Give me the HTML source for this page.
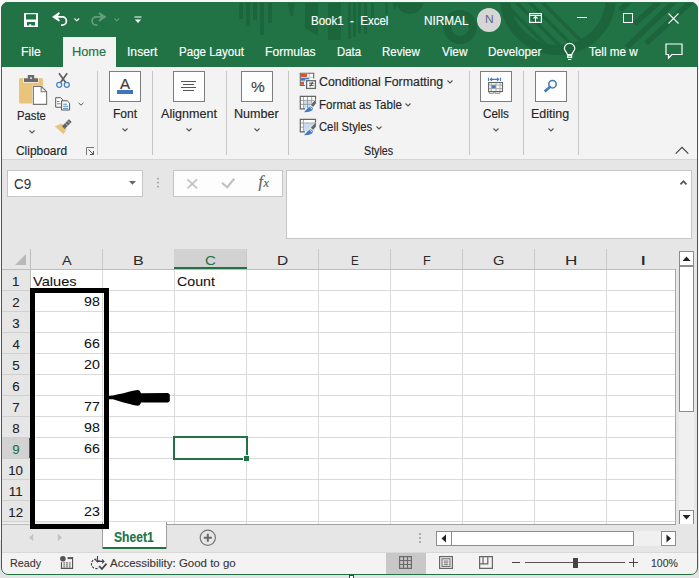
<!DOCTYPE html><html><head><meta charset="utf-8"><style>
*{margin:0;padding:0;box-sizing:border-box}
html,body{width:699px;height:578px;overflow:hidden;background:#f7f7f7;font-family:"Liberation Sans",sans-serif}
#wrap{position:absolute;left:0;top:0;width:699px;height:578px;clip-path:inset(2px 1px 3px 1px round 7px);background:#e6e6e6}
.a{position:absolute}
.t{position:absolute;white-space:nowrap;line-height:1;transform-origin:0 0}
#frame{position:absolute;left:1px;top:2px;width:697px;height:573px;border-radius:7px;border:1px solid #217346}
.box{position:absolute;width:32px;height:31px;border:1px solid #7d7d7d;background:#fdfdfd;top:71px}
.sep{position:absolute;width:1px;background:#c6c6c6;top:71px;height:84px}
svg{position:absolute;overflow:visible}
</style></head><body><div class="a" style="left:0;top:540px;width:699px;height:38px;background:#e3e3e3"></div><div id="wrap">
<div class="a" style="left:0px;top:0px;width:699px;height:67px;background:#217346;"></div>
<div class="a" style="left:239px;top:2px;width:4px;height:17px;background:#1c663d;"></div>
<div class="a" style="left:246px;top:2px;width:4px;height:24px;background:#1c663d;"></div>
<div class="a" style="left:253px;top:2px;width:4px;height:18px;background:#1c663d;"></div>
<div class="a" style="left:260px;top:2px;width:4px;height:33px;background:#1c663d;"></div>
<div class="a" style="left:268px;top:2px;width:4px;height:21px;background:#1c663d;"></div>
<div class="a" style="left:328px;top:2px;width:13px;height:38px;background:#1c663d;"></div>
<div class="a" style="left:348px;top:2px;width:3px;height:37px;background:#1c663d;"></div>
<div class="a" style="left:353px;top:2px;width:3px;height:35px;background:#1c663d;"></div>
<div class="a" style="left:358px;top:2px;width:3px;height:31px;background:#1c663d;"></div>
<div class="a" style="left:364px;top:2px;width:3px;height:32px;background:#1c663d;"></div>
<div class="a" style="left:371px;top:2px;width:3px;height:24px;background:#1c663d;"></div>
<div class="a" style="left:385px;top:2px;width:3px;height:12px;background:#1c663d;"></div>
<svg style="left:0;top:0" width="699" height="67"><polygon fill="#1c663d" points="287,2 295,2 293,16 291,16"/><polygon fill="#1c663d" points="305,2 318,2 318,36 305,28"/><polygon fill="#1c663d" points="392,2 398,2 395,10"/></svg>
<svg style="left:0;top:0" width="699" height="67"><defs><clipPath id="tb"><rect x="0" y="2" width="699" height="65"/></clipPath><clipPath id="bc"><circle cx="558" cy="-3" r="48"/></clipPath></defs><g clip-path="url(#tb)" fill="none" stroke="#1c643c"><circle cx="410" cy="0" r="14" fill="#1c643c" stroke="none"/><circle cx="460" cy="27" r="13" stroke-width="8"/><circle cx="558" cy="-3" r="53" stroke-width="10"/><g clip-path="url(#bc)" stroke-width="3.5"><path d="M496 -5L556 55M509 -5L569 55M522 -5L582 55M535 -5L595 55"/></g><path d="M620 10L630 1M634.5 24L661 0M626.5 47.5L675 1M646 43.5L692 1" stroke-width="5.5"/></g></svg>
<div class="a" style="left:63px;top:37px;width:53px;height:30px;background:#f3f3f3;"></div>
<div class="t" style="left:21.02px;top:45.6px;font-size:12px;color:#fff;transform:scaleX(1.0213);-webkit-text-stroke:0.15px #fff;">File</div>
<div class="t" style="left:72.48px;top:45.6px;font-size:12px;color:#217346;transform:scaleX(1.0663);-webkit-text-stroke:0.15px #217346;">Home</div>
<div class="t" style="left:126.71px;top:45.6px;font-size:12px;color:#fff;transform:scaleX(1.0118);-webkit-text-stroke:0.15px #fff;">Insert</div>
<div class="t" style="left:178.88px;top:45.6px;font-size:12px;color:#fff;transform:scaleX(0.9629);-webkit-text-stroke:0.15px #fff;">Page Layout</div>
<div class="t" style="left:265.13px;top:45.6px;font-size:12px;color:#fff;transform:scaleX(1.0090);-webkit-text-stroke:0.15px #fff;">Formulas</div>
<div class="t" style="left:336.69px;top:45.6px;font-size:12px;color:#fff;transform:scaleX(0.9442);-webkit-text-stroke:0.15px #fff;">Data</div>
<div class="t" style="left:382.28px;top:45.6px;font-size:12px;color:#fff;transform:scaleX(0.9583);-webkit-text-stroke:0.15px #fff;">Review</div>
<div class="t" style="left:441.54px;top:45.6px;font-size:12px;color:#fff;transform:scaleX(0.9868);-webkit-text-stroke:0.15px #fff;">View</div>
<div class="t" style="left:487.86px;top:45.6px;font-size:12px;color:#fff;transform:scaleX(0.9753);-webkit-text-stroke:0.15px #fff;">Developer</div>
<div class="t" style="left:589.47px;top:45.6px;font-size:12px;color:#fff;transform:scaleX(0.9759);-webkit-text-stroke:0.15px #fff;">Tell me w</div>
<div class="t" style="left:310.78px;top:14.600000000000001px;font-size:12.5px;color:#fff;transform:scaleX(0.9204);-webkit-text-stroke:0.15px #fff;">Book1&nbsp;&nbsp;-&nbsp;&nbsp;Excel</div>
<div class="t" style="left:423.76px;top:14.8px;font-size:12.5px;color:#fff;transform:scaleX(0.9408);-webkit-text-stroke:0.15px #fff;">NIRMAL</div>
<div class="a" style="left:477px;top:8px;width:24px;height:24px;border-radius:50%;background:#d6d6d6"></div>
<div class="t" style="left:484.54px;top:14px;font-size:11.5px;color:#66668f;transform:scaleX(1.0404);">N</div>
<div class="a" style="left:0px;top:67px;width:699px;height:92px;background:#f3f3f3;"></div>
<div class="a" style="left:0px;top:159px;width:699px;height:1px;background:#d6d6d6;"></div>
<div class="t" style="left:16.70px;top:110px;font-size:12px;color:#262626;transform:scaleX(0.9396);-webkit-text-stroke:0.15px #262626;">Paste</div>
<div class="t" style="left:15.90px;top:144.6px;font-size:12px;color:#262626;transform:scaleX(0.9944);-webkit-text-stroke:0.15px #262626;">Clipboard</div>
<div class="sep" style="left:97px"></div>
<div class="sep" style="left:152px"></div>
<div class="sep" style="left:226px"></div>
<div class="sep" style="left:288px"></div>
<div class="sep" style="left:469px"></div>
<div class="sep" style="left:523px"></div>
<div class="sep" style="left:578px"></div>
<div class="box" style="left:109px"></div>
<div class="box" style="left:173px"></div>
<div class="box" style="left:241px"></div>
<div class="box" style="left:480px"></div>
<div class="box" style="left:535px"></div>
<div class="t" style="left:112.63px;top:108px;font-size:12px;color:#262626;transform:scaleX(1.0052);-webkit-text-stroke:0.15px #262626;">Font</div>
<div class="t" style="left:161.00px;top:108px;font-size:12px;color:#262626;transform:scaleX(1.0473);-webkit-text-stroke:0.15px #262626;">Alignment</div>
<div class="t" style="left:234.49px;top:108px;font-size:12px;color:#262626;transform:scaleX(1.0477);-webkit-text-stroke:0.15px #262626;">Number</div>
<div class="t" style="left:482.62px;top:108px;font-size:12px;color:#262626;transform:scaleX(0.9696);-webkit-text-stroke:0.15px #262626;">Cells</div>
<div class="t" style="left:531.30px;top:108px;font-size:12px;color:#262626;transform:scaleX(1.0395);-webkit-text-stroke:0.15px #262626;">Editing</div>
<div class="t" style="left:318.88px;top:76px;font-size:12px;color:#262626;transform:scaleX(1.0290);-webkit-text-stroke:0.15px #262626;">Conditional Formatting</div>
<div class="t" style="left:318.57px;top:98.7px;font-size:12px;color:#262626;transform:scaleX(0.9668);-webkit-text-stroke:0.15px #262626;">Format as Table</div>
<div class="t" style="left:318.94px;top:121.30000000000001px;font-size:12px;color:#262626;transform:scaleX(0.9375);-webkit-text-stroke:0.15px #262626;">Cell Styles</div>
<div class="t" style="left:363.52px;top:144.6px;font-size:12px;color:#262626;transform:scaleX(0.8916);-webkit-text-stroke:0.15px #262626;">Styles</div>
<div class="a" style="left:7px;top:170px;width:136px;height:27px;background:#fff;border:1px solid #c6c6c6"></div>
<div class="t" style="left:14.03px;top:177px;font-size:14.5px;color:#333;transform:scaleX(0.9234);-webkit-text-stroke:0.05px #333;">C9</div>
<div class="a" style="left:173px;top:170px;width:110px;height:27px;background:#fdfdfd;border:1px solid #c6c6c6"></div>
<div class="a" style="left:286px;top:170px;width:406px;height:69px;background:#fff;border:1px solid #c6c6c6"></div>
<div class="a" style="left:31px;top:270px;width:644px;height:254px;background:#fff;"></div>
<div class="a" style="left:31px;top:290px;width:644px;height:1px;background:#dadada;"></div>
<div class="a" style="left:1px;top:290px;width:29px;height:1px;background:#d0d0d0;"></div>
<div class="a" style="left:31px;top:311px;width:644px;height:1px;background:#dadada;"></div>
<div class="a" style="left:1px;top:311px;width:29px;height:1px;background:#d0d0d0;"></div>
<div class="a" style="left:31px;top:332px;width:644px;height:1px;background:#dadada;"></div>
<div class="a" style="left:1px;top:332px;width:29px;height:1px;background:#d0d0d0;"></div>
<div class="a" style="left:31px;top:353px;width:644px;height:1px;background:#dadada;"></div>
<div class="a" style="left:1px;top:353px;width:29px;height:1px;background:#d0d0d0;"></div>
<div class="a" style="left:31px;top:374px;width:644px;height:1px;background:#dadada;"></div>
<div class="a" style="left:1px;top:374px;width:29px;height:1px;background:#d0d0d0;"></div>
<div class="a" style="left:31px;top:395px;width:644px;height:1px;background:#dadada;"></div>
<div class="a" style="left:1px;top:395px;width:29px;height:1px;background:#d0d0d0;"></div>
<div class="a" style="left:31px;top:416px;width:644px;height:1px;background:#dadada;"></div>
<div class="a" style="left:1px;top:416px;width:29px;height:1px;background:#d0d0d0;"></div>
<div class="a" style="left:31px;top:437px;width:644px;height:1px;background:#dadada;"></div>
<div class="a" style="left:1px;top:437px;width:29px;height:1px;background:#d0d0d0;"></div>
<div class="a" style="left:31px;top:458px;width:644px;height:1px;background:#dadada;"></div>
<div class="a" style="left:1px;top:458px;width:29px;height:1px;background:#d0d0d0;"></div>
<div class="a" style="left:31px;top:479px;width:644px;height:1px;background:#dadada;"></div>
<div class="a" style="left:1px;top:479px;width:29px;height:1px;background:#d0d0d0;"></div>
<div class="a" style="left:31px;top:500px;width:644px;height:1px;background:#dadada;"></div>
<div class="a" style="left:1px;top:500px;width:29px;height:1px;background:#d0d0d0;"></div>
<div class="a" style="left:31px;top:521px;width:644px;height:1px;background:#dadada;"></div>
<div class="a" style="left:1px;top:521px;width:29px;height:1px;background:#d0d0d0;"></div>
<div class="a" style="left:102px;top:270px;width:1px;height:254px;background:#dadada;"></div>
<div class="a" style="left:102px;top:249px;width:1px;height:20px;background:#c8c8c8;"></div>
<div class="a" style="left:174px;top:270px;width:1px;height:254px;background:#dadada;"></div>
<div class="a" style="left:174px;top:249px;width:1px;height:20px;background:#c8c8c8;"></div>
<div class="a" style="left:246px;top:270px;width:1px;height:254px;background:#dadada;"></div>
<div class="a" style="left:246px;top:249px;width:1px;height:20px;background:#c8c8c8;"></div>
<div class="a" style="left:318px;top:270px;width:1px;height:254px;background:#dadada;"></div>
<div class="a" style="left:318px;top:249px;width:1px;height:20px;background:#c8c8c8;"></div>
<div class="a" style="left:390px;top:270px;width:1px;height:254px;background:#dadada;"></div>
<div class="a" style="left:390px;top:249px;width:1px;height:20px;background:#c8c8c8;"></div>
<div class="a" style="left:462px;top:270px;width:1px;height:254px;background:#dadada;"></div>
<div class="a" style="left:462px;top:249px;width:1px;height:20px;background:#c8c8c8;"></div>
<div class="a" style="left:534px;top:270px;width:1px;height:254px;background:#dadada;"></div>
<div class="a" style="left:534px;top:249px;width:1px;height:20px;background:#c8c8c8;"></div>
<div class="a" style="left:606px;top:270px;width:1px;height:254px;background:#dadada;"></div>
<div class="a" style="left:606px;top:249px;width:1px;height:20px;background:#c8c8c8;"></div>
<div class="a" style="left:1px;top:269px;width:674px;height:1px;background:#bdbdbd;"></div>
<div class="a" style="left:30px;top:249px;width:1px;height:275px;background:#bdbdbd;"></div>
<div class="a" style="left:174px;top:249px;width:72px;height:19px;background:#d2d2d2;"></div>
<div class="a" style="left:2px;top:438px;width:28px;height:20px;background:#d2d2d2;"></div>
<div class="a" style="left:29px;top:438px;width:1px;height:20px;background:#217346;"></div>
<div class="a" style="left:174px;top:267px;width:73px;height:2px;background:#217346;"></div>
<div class="a" style="left:675px;top:269px;width:1px;height:256px;background:#a8a8a8;"></div>
<div class="t" style="left:62.00px;top:254px;font-size:13px;color:#2a2a2a;transform:scaleX(1.1105);-webkit-text-stroke:0.05px #2a2a2a;">A</div>
<div class="t" style="left:133.21px;top:254px;font-size:13px;color:#2a2a2a;transform:scaleX(1.2365);-webkit-text-stroke:0.05px #2a2a2a;">B</div>
<div class="t" style="left:205.24px;top:254px;font-size:13px;color:#217346;transform:scaleX(1.1629);-webkit-text-stroke:0.05px #217346;">C</div>
<div class="t" style="left:276.96px;top:254px;font-size:13px;color:#2a2a2a;transform:scaleX(1.1894);-webkit-text-stroke:0.05px #2a2a2a;">D</div>
<div class="t" style="left:350.73px;top:254px;font-size:13px;color:#2a2a2a;transform:scaleX(0.8892);-webkit-text-stroke:0.05px #2a2a2a;">E</div>
<div class="t" style="left:422.69px;top:254px;font-size:13px;color:#2a2a2a;transform:scaleX(0.9733);-webkit-text-stroke:0.05px #2a2a2a;">F</div>
<div class="t" style="left:493.27px;top:254px;font-size:13px;color:#2a2a2a;transform:scaleX(1.1274);-webkit-text-stroke:0.05px #2a2a2a;">G</div>
<div class="t" style="left:564.63px;top:254px;font-size:13px;color:#2a2a2a;transform:scaleX(1.3187);-webkit-text-stroke:0.05px #2a2a2a;">H</div>
<div class="t" style="left:639.62px;top:254px;font-size:13px;color:#2a2a2a;transform:scaleX(1.7814);-webkit-text-stroke:0.05px #2a2a2a;">I</div>
<svg style="left:14px;top:254px" width="13" height="12"><polygon points="12,0 12,11 1,11" fill="#b9b9b9"/></svg>
<div class="t" style="left:12.11px;top:274.7px;font-size:13.3px;color:#222;-webkit-text-stroke:0.1px #222;">1</div>
<div class="t" style="left:12.31px;top:295.7px;font-size:13.3px;color:#222;-webkit-text-stroke:0.1px #222;">2</div>
<div class="t" style="left:12.31px;top:316.7px;font-size:13.3px;color:#222;-webkit-text-stroke:0.1px #222;">3</div>
<div class="t" style="left:12.38px;top:337.7px;font-size:13.3px;color:#222;-webkit-text-stroke:0.1px #222;">4</div>
<div class="t" style="left:12.31px;top:358.7px;font-size:13.3px;color:#222;-webkit-text-stroke:0.1px #222;">5</div>
<div class="t" style="left:12.24px;top:379.7px;font-size:13.3px;color:#222;-webkit-text-stroke:0.1px #222;">6</div>
<div class="t" style="left:12.31px;top:400.7px;font-size:13.3px;color:#222;-webkit-text-stroke:0.1px #222;">7</div>
<div class="t" style="left:12.28px;top:421.7px;font-size:13.3px;color:#222;-webkit-text-stroke:0.1px #222;">8</div>
<div class="t" style="left:12.31px;top:442.7px;font-size:13.3px;color:#217346;-webkit-text-stroke:0.1px #217346;">9</div>
<div class="t" style="left:8.15px;top:463.7px;font-size:13.3px;color:#222;-webkit-text-stroke:0.1px #222;">10</div>
<div class="t" style="left:8.72px;top:484.7px;font-size:13.3px;color:#222;-webkit-text-stroke:0.1px #222;">11</div>
<div class="t" style="left:8.25px;top:505.70000000000005px;font-size:13.3px;color:#222;-webkit-text-stroke:0.1px #222;">12</div>
<div class="t" style="left:33.43px;top:274.7px;font-size:13.2px;color:#111;transform:scaleX(1.1087);-webkit-text-stroke:0.08px #111;">Values</div>
<div class="t" style="left:176.99px;top:274.9px;font-size:13.2px;color:#111;transform:scaleX(1.0769);-webkit-text-stroke:0.08px #111;">Count</div>
<div class="t" style="left:84.23px;top:294.9px;font-size:13.5px;color:#111;transform:scaleX(1.0500);-webkit-text-stroke:0.08px #111;">98</div>
<div class="t" style="left:84.23px;top:336.9px;font-size:13.5px;color:#111;transform:scaleX(1.0500);-webkit-text-stroke:0.08px #111;">66</div>
<div class="t" style="left:84.16px;top:357.9px;font-size:13.5px;color:#111;transform:scaleX(1.0500);-webkit-text-stroke:0.08px #111;">20</div>
<div class="t" style="left:84.37px;top:399.9px;font-size:13.5px;color:#111;transform:scaleX(1.0500);-webkit-text-stroke:0.08px #111;">77</div>
<div class="t" style="left:84.23px;top:420.9px;font-size:13.5px;color:#111;transform:scaleX(1.0500);-webkit-text-stroke:0.08px #111;">98</div>
<div class="t" style="left:84.23px;top:441.9px;font-size:13.5px;color:#111;transform:scaleX(1.0500);-webkit-text-stroke:0.08px #111;">66</div>
<div class="t" style="left:84.23px;top:504.9px;font-size:13.5px;color:#111;transform:scaleX(1.0500);-webkit-text-stroke:0.08px #111;">23</div>
<div class="a" style="left:173px;top:436px;width:75px;height:24px;border:2px solid #217346"></div>
<div class="a" style="left:243px;top:455px;width:6px;height:6px;background:#fff;"></div>
<div class="a" style="left:244px;top:456px;width:5px;height:5px;background:#217346;"></div>
<div class="a" style="left:676px;top:249px;width:21px;height:276px;background:#e6e6e6;"></div>
<div class="a" style="left:679px;top:266px;width:15px;height:257px;background:#f0f0f0;"></div>
<div class="a" style="left:679px;top:251px;width:15px;height:15px;background:#fff;border:1px solid #8c8c8c"></div>
<svg style="left:679px;top:251px" width="15" height="15"><polygon points="3.5,10 11.5,10 7.5,5.5" fill="#222"/></svg>
<div class="a" style="left:679px;top:266px;width:15px;height:146px;background:#fff;border:1px solid #8c8c8c"></div>
<div class="a" style="left:679px;top:510px;width:15px;height:15px;background:#fff;border:1px solid #8c8c8c"></div>
<svg style="left:679px;top:510px" width="15" height="15"><polygon points="3.5,5 11.5,5 7.5,9.5" fill="#222"/></svg>
<div class="a" style="left:1px;top:524px;width:697px;height:28px;background:#e6e6e6;"></div>
<div class="a" style="left:1px;top:522px;width:101px;height:2px;background:#ececec;"></div>
<div class="a" style="left:1px;top:524px;width:101px;height:1px;background:#bdbdbd;"></div>
<div class="a" style="left:166px;top:524px;width:510px;height:1px;background:#9f9f9f;"></div>
<div class="a" style="left:102px;top:522px;width:65px;height:27px;background:#fff;border-left:1px solid #9f9f9f;border-right:1px solid #9f9f9f"></div>
<div class="a" style="left:103px;top:547px;width:63px;height:2px;background:#217346;"></div>
<div class="t" style="left:113.94px;top:529.7px;font-size:14px;color:#217346;font-weight:bold;transform:scaleX(0.8638);-webkit-text-stroke:0.15px #217346;">Sheet1</div>
<svg style="left:199px;top:529px" width="18" height="18"><circle cx="8.8" cy="8.8" r="7.6" fill="none" stroke="#777" stroke-width="1.2"/><path d="M8.8 4.8V12.8M4.8 8.8H12.8" stroke="#6a6a6a" stroke-width="2"/></svg>
<svg style="left:0;top:0" width="100" height="560"><polygon points="33.2,533.8 33.2,541.2 29,537.5" fill="#c3c3c3"/><polygon points="57.8,533.8 57.8,541.2 62,537.5" fill="#c3c3c3"/></svg>
<svg style="left:418px;top:532px" width="5" height="12"><circle cx="2" cy="2" r="1" fill="#9a9a9a"/><circle cx="2" cy="6" r="1" fill="#9a9a9a"/><circle cx="2" cy="10" r="1" fill="#9a9a9a"/></svg>
<div class="a" style="left:436px;top:531px;width:240px;height:15px;background:#f0f0f0;"></div>
<div class="a" style="left:436px;top:531px;width:16px;height:15px;background:#fff;border:1px solid #8c8c8c"></div>
<svg style="left:436px;top:531px" width="16" height="15"><polygon points="10,3.5 10,11.5 5.5,7.5" fill="#222"/></svg>
<div class="a" style="left:451px;top:531px;width:183px;height:15px;background:#fff;border:1px solid #8c8c8c"></div>
<div class="a" style="left:661px;top:531px;width:15px;height:15px;background:#fff;border:1px solid #8c8c8c"></div>
<svg style="left:661px;top:531px" width="15" height="15"><polygon points="5.5,3.5 5.5,11.5 10,7.5" fill="#222"/></svg>
<div class="a" style="left:1px;top:553px;width:697px;height:22px;background:#f3f3f3;"></div>
<div class="a" style="left:1px;top:552px;width:697px;height:1px;background:#d9d9d9;"></div>
<div class="t" style="left:9.94px;top:558.2px;font-size:11.2px;color:#333;transform:scaleX(0.9596);-webkit-text-stroke:0.1px #333;">Ready</div>
<div class="t" style="left:110.00px;top:558.2px;font-size:11.2px;color:#333;transform:scaleX(1.0263);-webkit-text-stroke:0.1px #333;">Accessibility: Good to go</div>
<div class="a" style="left:386px;top:553px;width:40px;height:21px;background:#c8c8c8;"></div>
<svg style="left:24px;top:13px" width="14" height="14"><path fill-rule="evenodd" fill="#fff" d="M0 0H14V14H0Z M2 1.2H12V6.5H2Z M3 9H11V12.5H7.2V11.3H5.2V12.5H3Z"/></svg>
<svg style="left:0;top:0" width="80" height="35"><path d="M54 16.9H62.3A4.1 4.1 0 0 1 62.3 25.1H61" fill="none" stroke="#fff" stroke-width="1.8"/><path d="M52.6 16.9L59 12.6L59.4 13.6L56.8 16.9L59.4 20.2L59 21.2Z" fill="#fff" stroke="#fff" stroke-width="0.8" stroke-linejoin="round"/></svg>
<svg style="left:74.2px;top:17.6px" width="6" height="4"><path d="M0.5 0.5L2.8 2.8L5.1 0.5" fill="none" stroke="#fff" stroke-width="1.1"/></svg>
<svg style="left:0;top:0" width="130" height="35" opacity="0.3"><path d="M104.5 16.9H96.2A4.1 4.1 0 0 0 96.2 25.1H97.5" fill="none" stroke="#fff" stroke-width="1.8"/><path d="M105.9 16.9L99.5 12.6L99.1 13.6L101.7 16.9L99.1 20.2L99.5 21.2Z" fill="#fff" stroke="#fff" stroke-width="0.8" stroke-linejoin="round"/></svg>
<svg style="left:113.5px;top:17.6px" width="6" height="4" opacity="0.3"><path d="M0.5 0.5L2.8 2.8L5.1 0.5" fill="none" stroke="#fff" stroke-width="1.1"/></svg>
<svg style="left:134px;top:16px" width="8" height="8"><path d="M0.5 1H7.5" stroke="#fff" stroke-width="1.2"/><polygon points="0.8,3.5 7.2,3.5 4,7" fill="#fff"/></svg>
<svg style="left:529px;top:13px" width="13" height="10"><rect x="0.6" y="0.6" width="11.8" height="8.8" fill="none" stroke="#fff" stroke-width="1.2"/><path d="M0.6 2.5H12.4M6.5 2.5V9.4" stroke="#fff" stroke-width="1.1"/><path d="M4.5 5.5L6.5 3.5L8.5 5.5" fill="none" stroke="#fff" stroke-width="1.1"/></svg>
<div class="a" style="left:577px;top:17px;width:10px;height:1px;background:#fff;"></div>
<div class="a" style="left:623px;top:13px;width:10px;height:10px;border:1px solid #fff"></div>
<svg style="left:668px;top:13px" width="11" height="11"><path d="M0.5 0.5L10.5 10.5M10.5 0.5L0.5 10.5" stroke="#fff" stroke-width="1.1"/></svg>
<svg style="left:0;top:0" width="600" height="67"><path d="M567.4 54.6C567 52.2 564.4 50.8 564.4 48.6A5.2 5.2 0 0 1 574.8 48.6C574.8 50.8 572.2 52.2 571.8 54.6Z" fill="none" stroke="#fff" stroke-width="1.2"/><rect x="567.7" y="55.7" width="4" height="1.7" fill="none" stroke="#fff" stroke-width="1.1"/><path d="M568 59.5H571.3" stroke="#fff" stroke-width="1.2"/></svg>
<svg style="left:665px;top:43px" width="18" height="17"><path d="M1 1H17V11.5H7L3.5 15V11.5H1Z" fill="none" stroke="#fff" stroke-width="1.2" stroke-linejoin="miter"/></svg>
<svg style="left:0;top:0" width="60" height="110"><path d="M20.5 78H23.2V82.8H38.6V78H41.5A1.5 1.5 0 0 1 43 79.5V102A1.5 1.5 0 0 1 41.5 103.5H20.5A1.5 1.5 0 0 1 19 102V79.5A1.5 1.5 0 0 1 20.5 78Z" fill="#ebc47c"/><path fill-rule="evenodd" fill="#6b6b6b" d="M24 78.3H27.8V75H34.2V78.3H38V82H24Z M30.2 77.2H31.8V79H30.2Z"/><path d="M32.3 85.3H41.6L47.6 91.3V105.4H32.3Z" fill="#f3f3f3"/><path d="M33.4 86.4H41.2L46.6 91.8V104.4H33.4Z" fill="#fff" stroke="#767676" stroke-width="1.1"/><path d="M41.2 86.4V91.8H46.6" fill="none" stroke="#767676" stroke-width="1.1"/></svg>
<svg style="left:0;top:0" width="100" height="140"><path d="M59 73.3L65.6 82.6M67.2 73.3L60.6 82.6" stroke="#5f5f5f" stroke-width="1.7"/><circle cx="59.2" cy="84.8" r="2.5" fill="none" stroke="#4a86c5" stroke-width="1.3"/><circle cx="66.8" cy="84.8" r="2.5" fill="none" stroke="#4a86c5" stroke-width="1.3"/><path d="M55.7 97.7H60.6L62.6 99.7V107.2H55.7Z" fill="#fff" stroke="#555" stroke-width="1"/><path d="M57 101.5H59.5M57 103.8H60.5" stroke="#4a86c5" stroke-width="1"/><path d="M61.6 100.8H67.2L69.6 103.2V110H61.6Z" fill="#fff" stroke="#555" stroke-width="1"/><path d="M63.2 104.2H67M63.2 106.3H68.2M63.2 108.4H68.2" stroke="#4a86c5" stroke-width="1"/><path d="M54.8 126.3L61.3 123.6L66.6 128.9L63.6 134.2Z" fill="#ebc47c"/><path d="M61.9 126.2L68.9 119.2L71.7 122L64.7 129Z" fill="#666"/><path d="M65.2 122.9L68 125.7M67.3 120.8L70.1 123.6" stroke="#f3f3f3" stroke-width="0.6"/></svg>
<svg style="left:78px;top:102px" width="6" height="4"><path d="M0.5 0.8L3 3.2L5.5 0.8" fill="none" stroke="#555" stroke-width="1"/></svg>
<svg style="left:28.5px;top:129.5px" width="6" height="4"><path d="M0.5 0.5L3 3L5.5 0.5" fill="none" stroke="#555" stroke-width="1.1"/></svg>
<svg style="left:86px;top:147px" width="9" height="9"><path d="M0.5 8V0.5H8" fill="none" stroke="#777" stroke-width="1"/><path d="M2.5 2.5L7.5 7.5M4 7.5H7.5V4" fill="none" stroke="#555" stroke-width="1"/></svg>
<svg style="left:122.2px;top:128px" width="6" height="4"><path d="M0.5 0.5L3 3L5.5 0.5" fill="none" stroke="#555" stroke-width="1.1"/></svg>
<svg style="left:186.2px;top:128px" width="6" height="4"><path d="M0.5 0.5L3 3L5.5 0.5" fill="none" stroke="#555" stroke-width="1.1"/></svg>
<svg style="left:254.2px;top:128px" width="6" height="4"><path d="M0.5 0.5L3 3L5.5 0.5" fill="none" stroke="#555" stroke-width="1.1"/></svg>
<svg style="left:493.2px;top:128px" width="6" height="4"><path d="M0.5 0.5L3 3L5.5 0.5" fill="none" stroke="#555" stroke-width="1.1"/></svg>
<svg style="left:548.2px;top:128px" width="6" height="4"><path d="M0.5 0.5L3 3L5.5 0.5" fill="none" stroke="#555" stroke-width="1.1"/></svg>
<div class="t" style="left:120.20px;top:76px;font-size:15.5px;color:#3a3a3a;transform:scaleX(0.9702);-webkit-text-stroke:0.2px #3a3a3a;">A</div>
<div class="a" style="left:117px;top:90px;width:16px;height:4px;background:#3f74b8;"></div>
<div class="a" style="left:181px;top:81px;width:15px;height:1px;background:#555;"></div>
<div class="a" style="left:183px;top:84px;width:11px;height:1px;background:#555;"></div>
<div class="a" style="left:181px;top:87px;width:15px;height:1px;background:#555;"></div>
<div class="a" style="left:183px;top:90px;width:11px;height:1px;background:#555;"></div>
<div class="t" style="left:250.76px;top:80px;font-size:14px;color:#444;transform:scaleX(1.1063);-webkit-text-stroke:0.15px #444;">%</div>
<svg style="left:0;top:0" width="330" height="140"><rect x="300.5" y="73.5" width="13" height="12" fill="#fff"/><rect x="301" y="74" width="6" height="3" fill="#e0512a"/><rect x="301" y="78" width="8.3" height="2.8" fill="#3f7cc2"/><rect x="301" y="81.8" width="3" height="3" fill="#e0512a"/><path d="M309.4 73.5V77.4M301 77.4H313.5M301 81.3H305" stroke="#bbb" stroke-width="0.8"/><path d="M313.7 78.5V73.3H300.3V85.5H305" fill="none" stroke="#666" stroke-width="1.1"/><rect x="305.2" y="79.3" width="11.5" height="10.4" fill="#f3f3f3"/><rect x="306.6" y="80.7" width="8.8" height="7.7" fill="#fff" stroke="#666" stroke-width="1.3"/><path d="M309.1 83.2H313.7M309.1 85.3H313.7M312.6 81.9L310.1 86.6" stroke="#333" stroke-width="0.9"/><rect x="300.3" y="96.3" width="15.4" height="12.6" fill="#fff"/><rect x="303.9" y="100.9" width="7.5" height="7.6" fill="#c9dcf0"/><path d="M303.4 96.3V108.9M307.5 96.3V108.9M311.7 96.3V106M300.3 100.4H314M300.3 104.4H312" stroke="#9a9a9a" stroke-width="0.9"/><path d="M315.5 104V96.3H300.3V108.9H305" fill="none" stroke="#666" stroke-width="1.2"/><rect x="300.3" y="119.4" width="15.4" height="12.4" fill="#fff"/><rect x="303.9" y="123.3" width="11" height="8" fill="#c9dcf0"/><path d="M303.4 119.4V131.8M300.3 123H315.5M300.3 127.2H303.4" stroke="#9a9a9a" stroke-width="0.9"/><path d="M315.5 127V119.4H300.3V131.8H305" fill="none" stroke="#666" stroke-width="1.2"/></svg>
<svg style="left:0;top:0px" width="330" height="140"><path d="M316.6 98.6L309.6 105.4L312.6 108.2L316.6 104.4Z" fill="#f3f3f3"/><path d="M315.9 99.2L310.8 104.8L313 106.9L315.9 103.6Z" fill="#666"/><path d="M303 113.2L308 107.4L310.5 105.5L313.8 107.6L312.8 111L308.5 112.6Z" fill="#f3f3f3"/><path d="M303.9 112.3L308.2 107.8L310.7 106.3L313 107.9L312.2 110.5L308.2 112Z" fill="#3f7cc2"/><path d="M310.5 107.2L311.8 109.3" stroke="#fff" stroke-width="0.9"/></svg>
<svg style="left:0;top:23px" width="330" height="140"><path d="M316.6 98.6L309.6 105.4L312.6 108.2L316.6 104.4Z" fill="#f3f3f3"/><path d="M315.9 99.2L310.8 104.8L313 106.9L315.9 103.6Z" fill="#666"/><path d="M303 113.2L308 107.4L310.5 105.5L313.8 107.6L312.8 111L308.5 112.6Z" fill="#f3f3f3"/><path d="M303.9 112.3L308.2 107.8L310.7 106.3L313 107.9L312.2 110.5L308.2 112Z" fill="#3f7cc2"/><path d="M310.5 107.2L311.8 109.3" stroke="#fff" stroke-width="0.9"/></svg>
<svg style="left:0;top:0" width="520" height="100"><path d="M488.5 77.8V81M500.5 77.8V81" stroke="#3f7cc2" stroke-width="1.1"/><path d="M490.2 79.4H498.8" stroke="#3f7cc2" stroke-width="1.1"/><path d="M492 77.9L490.3 79.4L492 80.9M497 77.9L498.7 79.4L497 80.9" fill="none" stroke="#3f7cc2" stroke-width="1.1"/><rect x="488.6" y="82.5" width="13.9" height="9" fill="#fff"/><rect x="491.3" y="85" width="4.6" height="3.6" fill="#3f7cc2"/><path d="M491.3 82.5V91.5M496 82.5V91.5M500 82.5V91.5M488.6 85H502.5M488.6 88.6H502.5" stroke="#a5a5a5" stroke-width="0.9"/><rect x="488.6" y="82.5" width="13.9" height="9" fill="none" stroke="#666" stroke-width="1.1"/><path d="M489.2 91.8V93.2H493.8V91.8M495 91.8V93.2H500V91.8" fill="none" stroke="#777" stroke-width="0.9"/></svg>
<svg style="left:0;top:0" width="570" height="100"><circle cx="552.5" cy="84.2" r="3.7" fill="none" stroke="#3f78b9" stroke-width="1.5"/><path d="M549.8 87L545.6 90.6" stroke="#3f78b9" stroke-width="2.6" stroke-linecap="square"/></svg>
<svg style="left:675px;top:146px" width="14" height="9"><path d="M0.7 7.6L7 1.3L13.3 7.6" fill="none" stroke="#444" stroke-width="1.2"/></svg>
<svg style="left:447.2px;top:79.5px" width="6" height="4"><path d="M0.5 0.5L3 3L5.5 0.5" fill="none" stroke="#555" stroke-width="1.1"/></svg>
<svg style="left:405.2px;top:102.5px" width="6" height="4"><path d="M0.5 0.5L3 3L5.5 0.5" fill="none" stroke="#555" stroke-width="1.1"/></svg>
<svg style="left:376.2px;top:125.5px" width="6" height="4"><path d="M0.5 0.5L3 3L5.5 0.5" fill="none" stroke="#555" stroke-width="1.1"/></svg>
<svg style="left:0;top:0" width="240" height="200"><polygon points="128.9,181 136,181 132.45,184.8" fill="#666"/><rect x="157.2" y="177.8" width="1.6" height="1.6" fill="#999"/><rect x="157.2" y="181.8" width="1.6" height="1.6" fill="#999"/><rect x="157.2" y="185.8" width="1.6" height="1.6" fill="#999"/><path d="M187.5 179.3L197 188.3M197 179.3L187.5 188.3" stroke="#c2c2c2" stroke-width="1.7"/><path d="M222 182.8L227.2 187.3L234.2 178.7" fill="none" stroke="#c2c2c2" stroke-width="2.2"/></svg>
<div class="t" style="left:258.5px;top:173.5px;font-family:'Liberation Serif',serif;font-size:16px;color:#606060;font-style:italic;-webkit-text-stroke:0.2px #606060">f<span style="font-size:12px;margin-left:0.5px">x</span></div>
<svg style="left:0;top:0" width="699" height="200"><path d="M680.5 184.4L683.5 181.2L686.5 184.4" fill="none" stroke="#555" stroke-width="1.8"/></svg>
<svg style="left:55px;top:552px" width="60" height="22"><circle cx="7.9" cy="6.7" r="2.8" fill="#555"/><rect x="12.6" y="5.1" width="5.5" height="2" fill="#555"/><rect x="17" y="5.1" width="1.1" height="12" fill="#555"/><rect x="5.9" y="15.8" width="12.2" height="1.2" fill="#555"/><rect x="5.9" y="10.2" width="1.2" height="6.8" fill="#555"/><rect x="8.3" y="10.4" width="1.9" height="1" fill="#555"/><rect x="8.3" y="12.4" width="1.9" height="1" fill="#555"/><rect x="8.3" y="14.4" width="1.9" height="1" fill="#555"/><rect x="11" y="10.4" width="1.9" height="1" fill="#555"/><rect x="11" y="12.4" width="1.9" height="1" fill="#555"/><rect x="11" y="14.4" width="1.9" height="1" fill="#555"/><rect x="13.8" y="10.4" width="1.9" height="1" fill="#555"/><rect x="13.8" y="12.4" width="1.9" height="1" fill="#555"/><rect x="13.8" y="14.4" width="1.9" height="1" fill="#555"/></svg>
<svg style="left:55px;top:552px" width="60" height="22"><path d="M41.5 7.2A4.7 4.7 0 1 0 44 15.6" fill="none" stroke="#444" stroke-width="1.2" stroke-dasharray="2.3 1.2"/><path d="M42.5 4V10M40.6 8.1L42.5 10L44.4 8.1M42.5 9.4H49M47.1 7.5L49 9.4L47.1 11.3" fill="none" stroke="#444" stroke-width="1.1"/><path d="M44.2 14L46.9 17L51.5 11.6" fill="none" stroke="#444" stroke-width="1.8"/></svg>
<svg style="left:399px;top:556px" width="13" height="13"><path d="M0.6 0.6H12.4V12.4H0.6Z M4.5 0.6V12.4M8.5 0.6V12.4M0.6 4.5H12.4M0.6 8.5H12.4" fill="none" stroke="#6a6a6a" stroke-width="1.2"/></svg>
<svg style="left:439px;top:556px" width="14" height="13"><rect x="0.6" y="0.6" width="12.8" height="11.8" fill="none" stroke="#666" stroke-width="1.2"/><rect x="3" y="2.8" width="8" height="7.6" fill="none" stroke="#666" stroke-width="1"/><path d="M4.7 5H9.3M4.7 6.8H9.3M4.7 8.6H9.3" stroke="#666" stroke-width="0.9"/></svg>
<svg style="left:479px;top:556px" width="14" height="13"><path d="M0.6 0.6H13.4V12.4H0.6Z M0.6 7.8H8.8V0.6 M4 0.6V7.8" fill="none" stroke="#666" stroke-width="1.2"/></svg>
<div class="a" style="left:512px;top:562px;width:8px;height:1px;background:#444;"></div>
<div class="a" style="left:525px;top:562px;width:100px;height:1px;background:#555;"></div>
<div class="a" style="left:573px;top:558px;width:5px;height:10px;background:#444;"></div>
<div class="a" style="left:629px;top:562px;width:9px;height:1px;background:#444;"></div>
<div class="a" style="left:633px;top:558px;width:1px;height:9px;background:#444;"></div>
<div class="t" style="left:651.01px;top:558.2px;font-size:11.2px;color:#333;transform:scaleX(0.9402);-webkit-text-stroke:0.1px #333;">100%</div>
<div class="a" style="left:30px;top:288px;width:79px;height:241px;border:5px solid #000"></div>
<svg style="left:0;top:0" width="699" height="578"><polygon fill="#000" points="108.5,396 113,395.6 117,394.4 123.5,393.3 129.7,391.4 133,390.8 137.5,389.9 139.5,390.5 140.6,392.5 141,393.2 168,393 169.8,394.5 169.8,401 168,402.5 141,402.5 140.6,403.5 139.5,405.2 137.5,405.8 133,405 129.7,404 123.5,402.4 117,400.6 113,399.3 108.5,399.3"/></svg>
</div><div id="frame"></div><div class="a" style="left:349px;top:575px;width:5px;height:3px;background:#fff;border:1.4px solid #444;border-bottom:none"></div></body></html>
